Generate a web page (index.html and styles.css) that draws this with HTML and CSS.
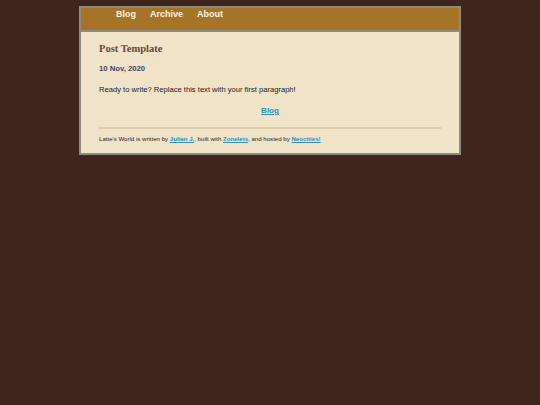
FILE: index.html
```html
<!DOCTYPE html>
<html>
<head>
<meta charset="utf-8">
<link rel="stylesheet" href="styles.css">
</head>
<body>
<div class="wrap">
  <nav class="nav">
    <a href="#">Blog</a>
    <a href="#">Archive</a>
    <a href="#">About</a>
  </nav>
  <main class="content">
    <h1 class="title">Post Template</h1>
    <p class="date">10 Nov, 2020</p>
    <p class="text">Ready to write? Replace this text with your first paragraph!</p>
    <p class="back"><a href="#">Blog</a></p>
    <hr class="rule">
    <footer class="foot">Latte's World is written by <a href="#">Julian J.</a>, built with <a href="#">Zonelets</a>, and hosted by <a href="#">Neocities!</a></footer>
  </main>
</div>
</body>
</html>
```
FILE: styles.css
```css
html, body {
  margin: 0;
  padding: 0;
  background: #3e261e;
}
body {
  padding-top: 6px;
  font-family: "Liberation Sans", Arial, sans-serif;
}
.wrap {
  width: 378px;
  margin: 0 auto;
  border: 2px solid #8d8b7d;
  background: #f1e3c8;
}
.nav {
  display: flex;
  gap: 14px;
  height: 24px;
  align-items: flex-start;
  padding-left: 35px;
  background: #a67427;
  border-bottom: 2px solid #8d8b7d;
  box-sizing: border-box;
}
.nav a {
  color: #fbf3e4;
  font-weight: bold;
  font-size: 9px;
  line-height: 12px;
  text-decoration: none;
}
.content {
  padding: 11px 18px 11px 18px;
}
.title {
  margin: 0;
  font-family: "Liberation Serif", "Times New Roman", serif;
  font-size: 10.5px;
  color: #6b4633;
  font-weight: bold;
}
.date {
  margin: 10px 0 0;
  font-size: 7.7px;
  font-weight: bold;
  color: #3c4566;
}
.text {
  margin: 12px 0 0;
  font-size: 7.6px;
  color: #1e1a16;
}
.back {
  margin: 12px 0 0;
  text-align: center;
  font-size: 8px;
  font-weight: bold;
}
.back a, .foot a {
  color: #2a8fbf;
}
.rule {
  margin: 12px 0 0;
  border: 0;
  height: 2px;
  background: #dccbaf;
}
.foot {
  margin-top: 6px;
  font-size: 6.1px;
  color: #2a241e;
}
.foot a {
  font-weight: bold;
}
```
